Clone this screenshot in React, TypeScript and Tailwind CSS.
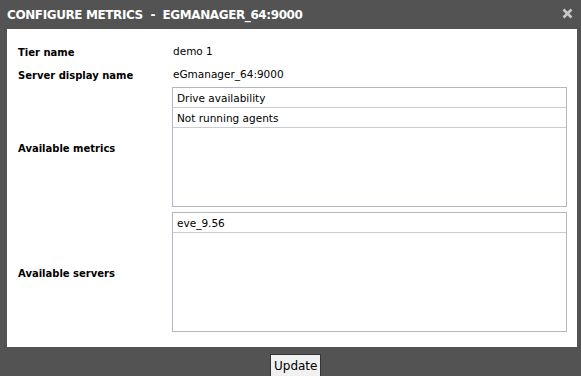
export default function App() {
  return (
    <div className="w-[581px] h-[376px] bg-[#535353] overflow-hidden flex flex-col" style={{ fontFamily: '"DejaVu Sans", Verdana, sans-serif' }}>
      <div className="h-[29px] shrink-0 flex items-center justify-between pl-[7px] pr-[8px]">
        <span className="text-white font-bold text-[12px] whitespace-pre tracking-[-0.4px]">CONFIGURE METRICS  -  EGMANAGER_64:9000</span>
        <svg width="11" height="11" viewBox="0 0 11 11" className="mb-[2px]">
          <path d="M1.5 1.5 L9.5 9.5 M9.5 1.5 L1.5 9.5" stroke="#c8c8c8" strokeWidth="2.6" strokeLinecap="butt" />
        </svg>
      </div>
      <div className="shrink-0 mx-[7px] mr-[4px] bg-white h-[318px] pl-[11px] pr-[10px] pt-[13px] text-[10px] text-black">
        <div className="flex items-center h-[20px]">
          <div className="w-[155px] font-bold">Tier name</div>
          <div className="text-[10.5px]">demo 1</div>
        </div>
        <div className="flex items-center h-[20px] mt-[3px]">
          <div className="w-[155px] font-bold">Server display name</div>
          <div className="text-[10.5px]">eGmanager_64:9000</div>
        </div>
        <div className="flex items-center mt-[2px]">
          <div className="w-[154px] font-bold pt-[2px]">Available metrics</div>
          <ListBox items={["Drive availability", "Not running agents"]} />
        </div>
        <div className="flex items-center mt-[5px]">
          <div className="w-[154px] font-bold pt-[2px]">Available servers</div>
          <ListBox items={["eve_9.56"]} />
        </div>
      </div>
      <div className="shrink-0 flex pl-[270px] pt-[7px]">
        <button className="h-[24px] px-[3px] bg-[#f0f0f0] border border-[#333] text-[12px] text-black leading-none">Update</button>
      </div>
    </div>
  );
}

function ListBox({ items }: { items: string[] }) {
  return (
    <div className="w-[395px] h-[120px] border border-[#b3b7c2] bg-white">
      {items.map((it) => (
        <div key={it} className="h-[20px] border-b border-[#c9ccd3] pl-[4px] pt-[2px] flex items-center text-[10.5px]">
          {it}
        </div>
      ))}
    </div>
  );
}
